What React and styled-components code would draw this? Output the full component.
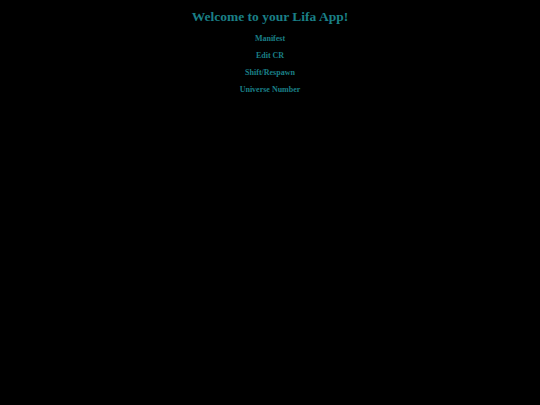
import { styled, createGlobalStyle } from 'styled-components'

const GlobalStyle = createGlobalStyle`
  html, body {
    margin: 0;
    background: #000;
    font-family: "Liberation Serif", "Times New Roman", serif;
  }
`

const Page = styled.div`
  min-height: 405px;
  background: #000;
  display: flex;
  flex-direction: column;
  align-items: center;
  padding-top: 9px;
  color: #1a7f86;
`

const Title = styled.h1`
  margin: 0 0 9px;
  font-size: 13.5px;
  font-weight: bold;
  line-height: 16px;
`

const Menu = styled.nav`
  display: flex;
  flex-direction: column;
  align-items: center;
  gap: 7px;
`

const Item = styled.a`
  font-size: 8px;
  font-weight: bold;
  line-height: 10px;
  color: inherit;
  text-decoration: none;
  cursor: pointer;
`

const items = ['Manifest', 'Edit CR', 'Shift/Respawn', 'Universe Number']

export default function App() {
  return (
    <>
      <GlobalStyle />
      <Page>
        <Title>Welcome to your Lifa App!</Title>
        <Menu>
          {items.map((label) => (
            <Item key={label}>{label}</Item>
          ))}
        </Menu>
      </Page>
    </>
  )
}
